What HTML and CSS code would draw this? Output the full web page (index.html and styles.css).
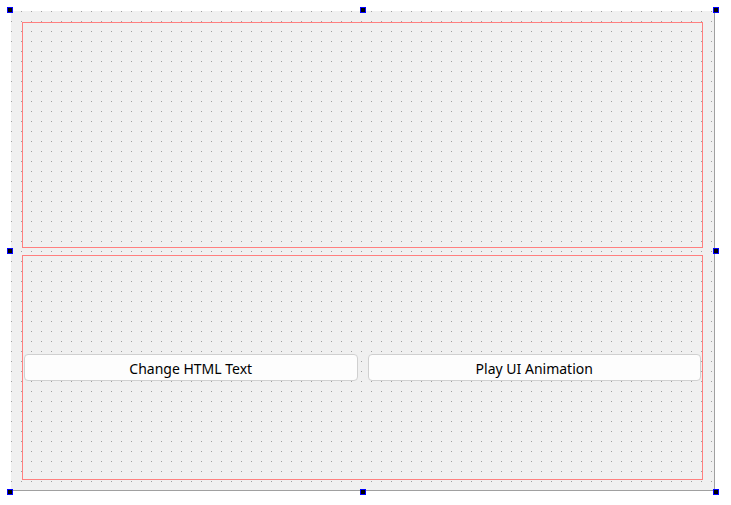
FILE: index.html
```html
<!DOCTYPE html>
<html>
<head>
<meta charset="utf-8">
<link rel="stylesheet" href="styles.css">
</head>
<body>
<div class="form">
  <div class="frame top-frame"></div>
  <div class="frame bottom-frame">
    <button class="btn">Change HTML Text</button>
    <button class="btn">Play UI Animation</button>
  </div>
  <span class="handle h-tl"></span>
  <span class="handle h-tc"></span>
  <span class="handle h-tr"></span>
  <span class="handle h-ml"></span>
  <span class="handle h-mr"></span>
  <span class="handle h-bl"></span>
  <span class="handle h-bc"></span>
  <span class="handle h-br"></span>
</div>
</body>
</html>
```
FILE: styles.css
```css
html, body {
  margin: 0;
  padding: 0;
  background: #ffffff;
}
body {
  box-sizing: border-box;
  min-height: 505px;
  padding: 11px 0 14px 11px;
  font-family: "Noto Sans", "Open Sans", sans-serif;
}
.form {
  position: relative;
  box-sizing: border-box;
  width: 704px;
  height: 480px;
  padding: 11px 11px 10px 11px;
  border-right: 1px solid #a0a0a0;
  border-bottom: 1px solid #a0a0a0;
  background-color: #f0f0f0;
  background-image:
    linear-gradient(to right, transparent 1px, #f0f0f0 1px),
    linear-gradient(to bottom, #a0a0a0 1px, #f0f0f0 1px);
  background-size: 10px 10px, 10px 10px;
  background-position: 0 0, 0 0;
  display: flex;
  flex-direction: column;
  gap: 7px;
}
.frame {
  border: 1px solid #ff7f7f;
  box-sizing: border-box;
}
.top-frame {
  height: 226px;
}
.bottom-frame {
  flex: 1;
  display: flex;
  align-items: center;
  gap: 10px;
  padding: 0 1px;
}
.btn {
  flex: 1;
  height: 27px;
  box-sizing: border-box;
  border: 1px solid #d0d0d0;
  border-radius: 4px;
  background: #fdfdfd;
  font-family: "Noto Sans", "Open Sans", sans-serif;
  font-size: 14px;
  color: #000;
  padding: 2px 0 0 0;
  line-height: 23px;
}
.handle {
  position: absolute;
  z-index: 2;
  width: 6px;
  height: 6px;
  box-sizing: border-box;
  border: 1px solid #0000ff;
  background: #000;
}
.h-tl { left: -4px; top: -4px; }
.h-tc { left: 349px; top: -4px; }
.h-tr { left: 702px; top: -4px; }
.h-ml { left: -4px; top: 237px; }
.h-mr { left: 702px; top: 237px; }
.h-bl { left: -4px; bottom: -5px; }
.h-bc { left: 349px; bottom: -5px; }
.h-br { left: 702px; bottom: -5px; }
```
